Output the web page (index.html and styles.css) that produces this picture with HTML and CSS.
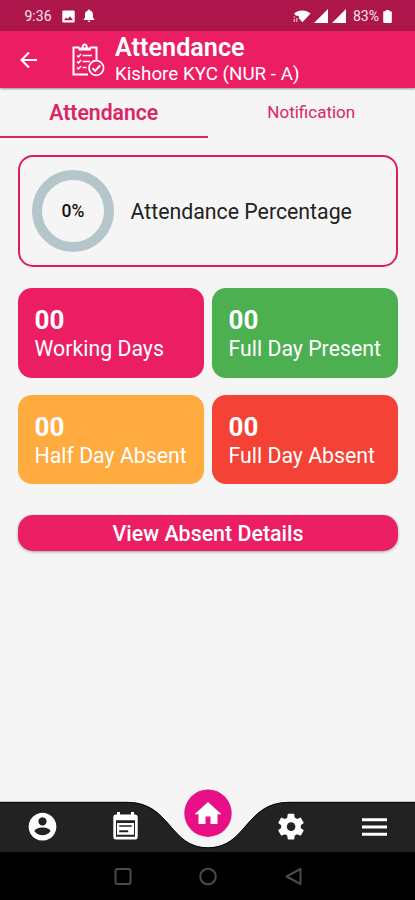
FILE: index.html
```html
<!DOCTYPE html>
<html lang="en">
<head>
<meta charset="utf-8">
<title>Attendance</title>
<link rel="stylesheet" href="styles.css">
</head>
<body>
<div class="status">
  <span class="time">9:36</span>
  <svg class="pic" width="13" height="13" viewBox="0 0 13 13"><path fill="#fff" fill-rule="evenodd" d="M1.500 0.500h10a1.200 1.200 0 0 1 1.200 1.200v9.600a1.200 1.200 0 0 1-1.200 1.200h-10A1.200 1.200 0 0 1 .3 11.300V1.700A1.200 1.200 0 0 1 1.500.5zM2 10.200h9L8 6.200 5.700 9 4.200 7.400z"/></svg>
  <svg class="bell" width="12" height="14" viewBox="0 0 12 14"><path fill="#fff" d="M6 .5c.7 0 1 .5 1 1.100 2 .5 3 2 3 4v3.200l1.300 1.300v.8H.7v-.8L2 8.800V5.600c0-2 1-3.500 3-4C5 1 5.300.5 6 .5zM4.700 11.700h2.600a1.300 1.300 0 0 1-2.600 0z"/></svg>
  <svg class="wifi" width="18" height="14" viewBox="0 0 18 14"><path fill="#fff" d="M1 4.500C5.500.5 13 .5 17.500 4.500L9.500 13.200 5.800 9.200V6.800H3z"/><path fill="#fff" d="M.6 7.500h1.500V9H.6zM.6 10h1.500v3H.6zM3.100 9h1.400v4H3.100z" opacity=".6"/></svg>
  <svg class="signal" width="14" height="14" viewBox="0 0 14 14"><path fill="#fff" d="M14 0v14H0z"/></svg>
  <svg class="signal" width="14" height="14" viewBox="0 0 14 14"><path fill="#fff" d="M14 0v14H0z"/></svg>
  <span class="pct">83%</span>
  <svg class="battery" width="9" height="13" viewBox="0 0 9 13"><path fill="#fff" d="M2.700 0h3.600v1.300h1.700q.8 0 .8.8v10q0 .8-.8.8H1q-.8 0-.8-.8v-10q0-.8.8-.8h1.700z"/></svg>
</div>
<header class="bar">
  <svg class="back" width="18" height="18" viewBox="0 0 18 18" fill="none" stroke="#fff" stroke-width="2"><path d="M17 9H2M9 1.500L1.500 9 9 16.500"/></svg>
  <svg class="clip" width="34" height="36" viewBox="0 0 34 36" fill="none" stroke="#fff" stroke-width="2"><path d="M17 32.500H2.500V5.500h6M19 5.500h6.500V18"/><path fill="#fff" fill-rule="evenodd" stroke="none" d="M7.500 8.500V5.500h3C10.800 3 12 1.500 13.700 1.500S16.600 3 16.900 5.500h3v3zM13.700 3.500a1 1 0 1 0 .01 0z"/><path stroke-width="1.500" d="M6 13.500l1.500 1.400 2.500-3M6 19.500l1.500 1.400 2.500-3M6 25.500l1.500 1.400 2.500-3M11.500 13.500H21M11.500 19.500H19M11.500 25.500h4"/><circle cx="25.300" cy="26" r="7.300" stroke-width="1.700"/><path d="M21.500 26.200l2.700 2.700 5-5.500"/></svg>
  <div class="titles">
    <h1>Attendance</h1>
    <p>Kishore KYC (NUR - A)</p>
  </div>
</header>
<nav class="tabs">
  <div class="tab active"><span>Attendance</span></div>
  <div class="tab"><span>Notification</span></div>
</nav>
<main>
  <section class="percentage">
    <div class="ring">0%</div>
    <span class="label">Attendance Percentage</span>
  </section>
  <section class="tiles">
    <div class="tile pink"><b>00</b><span>Working Days</span></div>
    <div class="tile green"><b>00</b><span>Full Day Present</span></div>
    <div class="tile orange"><b>00</b><span>Half Day Absent</span></div>
    <div class="tile red"><b>00</b><span>Full Day Absent</span></div>
  </section>
  <button class="details">View Absent Details</button>
</main>
<footer>
  <svg width="415" height="115" viewBox="0 785 415 115">
    <path fill="#222" d="M0 802H127C171 802 169 847.500 208 847.500S245 802 289 802H415V853H0z"/>
    <path fill="none" stroke="#080808" d="M0 802.300H127C171 802.300 169 847.800 208 847.800S245 802.300 289 802.300H415"/>
    <path d="M0 852h415v48H0z"/>
    <circle cx="208" cy="813.200" r="23.700" fill="#e90f86"/>
    <path fill="#fff" d="M208 802l-13.500 12.200h4V824h7v-7.500h5V824h7v-9.800h4z"/>
    <path fill="#fff" fill-rule="evenodd" d="M42.500 812.800a13.900 13.900 0 1 0 .01 0zM42.500 817.300a4.100 4.100 0 1 1-.01 0zM34.500 831.300c1.200-5 14.800-5 16 0-3.800 5.300-12.200 5.300-16 0z"/>
    <path fill="#fff" fill-rule="evenodd" d="M117 812h3v2.500h11V812h3v2.500h1.300q2.400 0 2.400 2.500v20q0 2.500-2.400 2.500h-19.600q-2.400 0-2.400-2.500v-20q0-2.500 2.400-2.500h1.300zM116 820.300v16.400h19v-16.400z"/>
    <path fill="#fff" fill-rule="evenodd" d="M117 823h17v11.700H117zM119.200 825.200v1.600h12.600v-1.600zM119.200 830.300v2h9v-2z"/>
    <g transform="translate(275.500 811) scale(1.300)"><path fill="#fff" d="M19.400 13c0-.3.100-.6.100-1s0-.7-.1-1l2.100-1.600c.2-.2.200-.4.100-.6l-2-3.500c-.1-.2-.4-.3-.6-.2l-2.500 1c-.5-.4-1.100-.7-1.700-1l-.4-2.600c0-.2-.2-.4-.5-.4h-4c-.2 0-.5.200-.5.400L9 5.100c-.6.300-1.200.6-1.700 1l-2.500-1c-.2-.1-.5 0-.6.200l-2 3.500c-.1.200-.1.500.1.600L4.400 11a8 8 0 0 0 0 2l-2.100 1.600c-.2.200-.2.400-.1.600l2 3.500c.1.200.4.300.6.200l2.500-1c.5.400 1.100.7 1.700 1l.4 2.600c0 .2.300.4.500.4h4c.3 0 .5-.2.500-.4l.4-2.600c.6-.3 1.200-.6 1.700-1l2.500 1c.2.100.5 0 .6-.2l2-3.500c.1-.2.100-.5-.1-.6z"/><circle cx="12" cy="12" r="3.300" fill="#222"/></g>
    <path stroke="#fff" stroke-width="3" d="M362 819.700h25M362 827h25M362 834.300h25"/>
    <g fill="none" stroke="#4b4b4b" stroke-width="2"><rect x="115.500" y="869" width="15" height="15" rx="2"/><circle cx="208" cy="876.500" r="7.800"/><path stroke-linejoin="round" d="M300.500 869v15L286.500 876.500z"/></g>
  </svg>
</footer>
</body>
</html>
```
FILE: styles.css
```css
* { box-sizing: border-box; }
body {
  margin: 0;
  height: 900px;
  display: flex;
  flex-direction: column;
  background: #f5f5f5;
  font-family: Roboto, sans-serif;
  overflow: hidden;
}
h1, p { margin: 0; font-weight: 400; }
svg { display: block; flex: none; }
.status {
  height: 31px;
  flex: none;
  display: flex;
  align-items: center;
  padding: 1px 23px 0 24.5px;
  background: #ad164a;
  color: #f8e4eb;
  font-size: 14px;
}
.time { width: 37px; }
.bell { margin-left: 8px; }
.wifi { margin-left: auto; }
.signal { margin-left: 3px; }
.signal + .signal { margin-left: 4px; }
.pct { margin-left: 7px; }
.battery { margin-left: 4px; }
.bar {
  height: 57px;
  flex: none;
  display: flex;
  align-items: center;
  padding-left: 20px;
  background: #eb1d63;
  color: #fff;
  box-shadow: 0 1px 2px rgba(0, 0, 0, .4);
}
.clip { margin-left: 33px; }
.titles { margin-left: 10px; white-space: nowrap; }
.titles h1 { font-size: 25.2px; line-height: 28px; font-weight: 600; padding-top: 1px; }
.titles p { font-size: 18.8px; line-height: 24px; }
.tabs { display: flex; height: 50px; flex: none; }
.tab {
  flex: 1;
  display: flex;
  align-items: center;
  justify-content: center;
  font-size: 17px;
  color: #d92762;
}
.tab.active {
  font-size: 21.2px;
  font-weight: 600;
  border-bottom: 2px solid #d92762;
}
.tab:not(.active) { padding-bottom: 2px; }
main { padding: 17px 17px 0 18px; flex: 1; }
.percentage {
  height: 112px;
  display: flex;
  align-items: center;
  padding-left: 12px;
  border: 2px solid #dc1f5e;
  border-radius: 15px;
}
.ring {
  width: 82px;
  height: 82px;
  display: flex;
  align-items: center;
  justify-content: center;
  border: 10px solid #b5c6ca;
  border-radius: 50%;
  font-size: 17.5px;
  font-weight: 500;
  color: #111;
}
.label { margin-left: 16.5px; font-size: 21.3px; color: #222; }
.tiles {
  display: grid;
  grid-template-columns: 1fr 1fr;
  gap: 17px 8px;
  margin-top: 21px;
}
.tile {
  height: 89.500px;
  padding: 17px 0 0 16.500px;
  border-radius: 14px;
  color: #fff;
  white-space: nowrap;
}
.tile b, .tile span { display: block; }
.tile b { font-size: 26px; line-height: 30px; font-weight: 700; }
.tile span { font-size: 21.3px; line-height: 28px; }
.pink { background: #eb1d63; }
.green { background: #4caf50; }
.orange { background: #ffab40; }
.red { background: #f44336; }
.details {
  display: block;
  width: 100%;
  height: 36px;
  margin-top: 31px;
  padding: 0;
  border: 0;
  border-radius: 15px;
  background: #eb1d63;
  color: #fff;
  font: 500 21.4px Roboto, sans-serif;
  box-shadow: 0 1px 3px rgba(0, 0, 0, .35);
}
footer { flex: none; height: 115px; }
```
